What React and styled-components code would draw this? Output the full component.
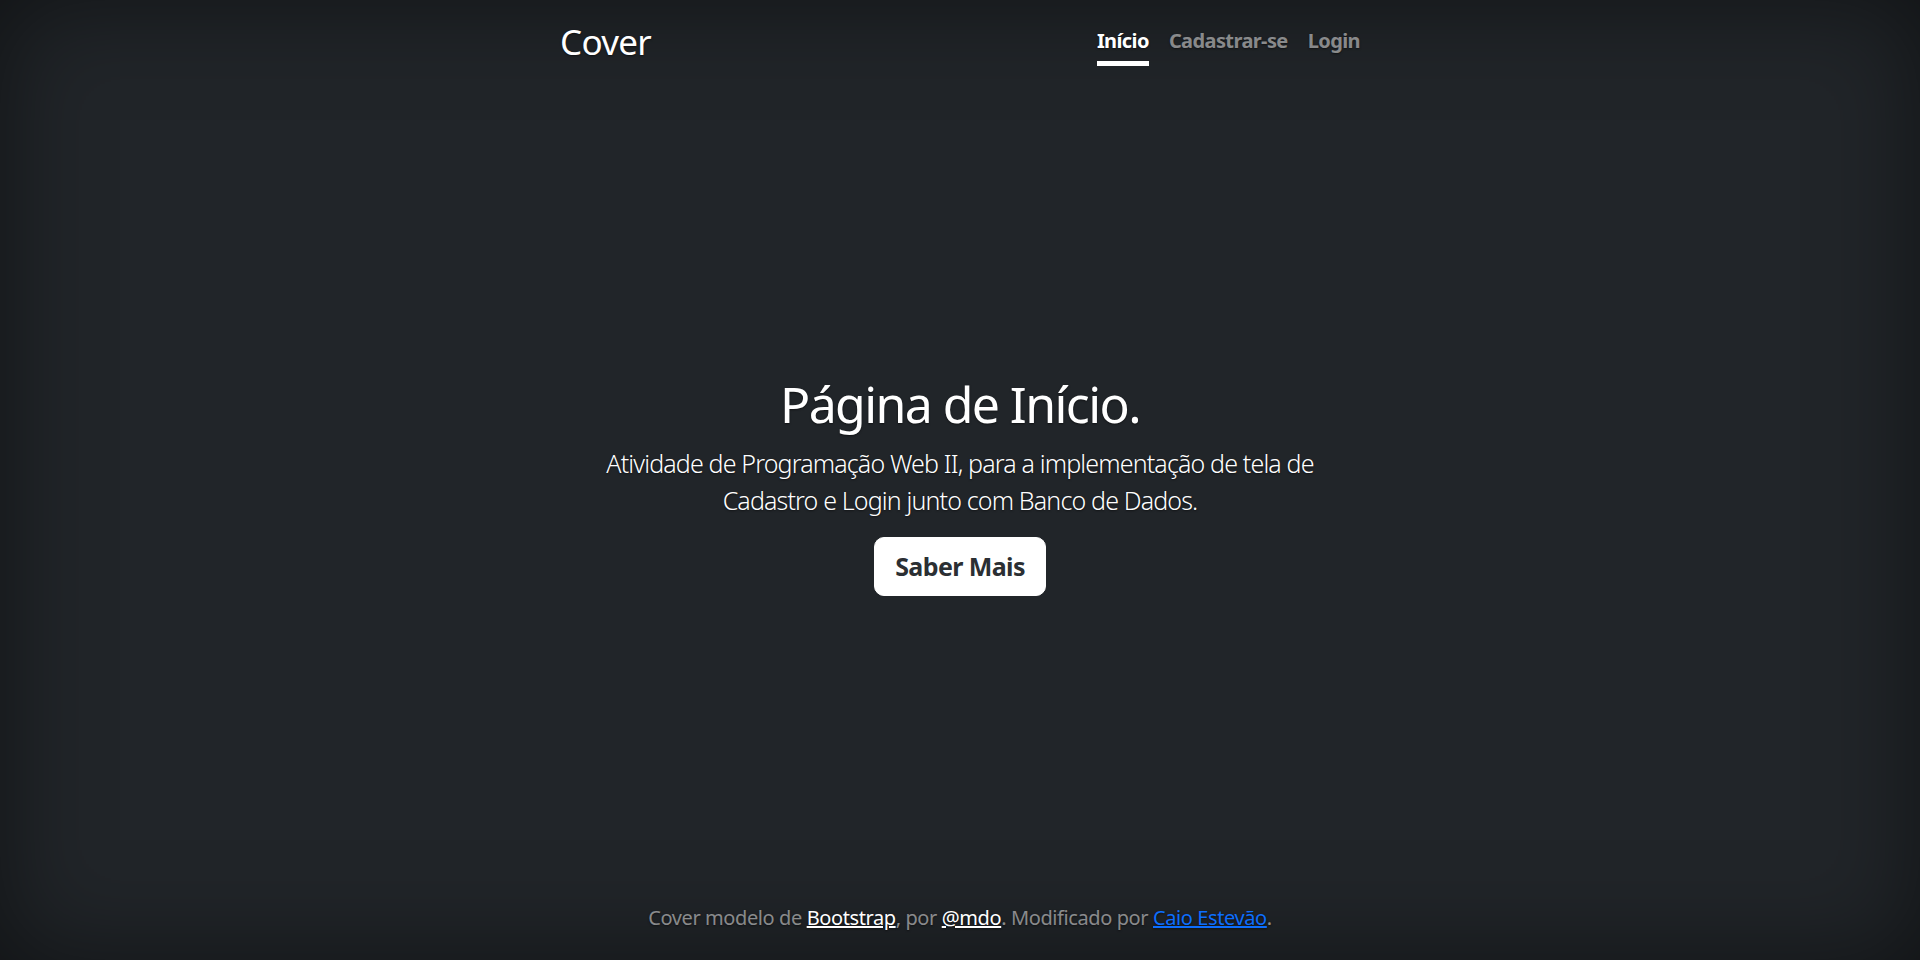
import * as React from 'react'
import styled, { createGlobalStyle } from 'styled-components'

const GlobalStyle = createGlobalStyle`
  html, body, #root {
    height: 100%;
  }

  body {
    margin: 0;
    background-color: #212529;
    color: #fff;
    font-family: 'Noto Sans', 'Open Sans', sans-serif;
    font-size: 20px;
    line-height: 1.5;
    box-shadow: inset 0 0 100px rgba(0, 0, 0, 0.5);
    text-shadow: 0 1px 2px rgba(0, 0, 0, 0.5);
  }

  *, *::before, *::after {
    box-sizing: border-box;
  }
`

const CoverContainer = styled.div`
  display: flex;
  flex-direction: column;
  width: 100%;
  max-width: 840px;
  height: 100%;
  margin: 0 auto;
  padding: 21px 20px 27px;
`

const Masthead = styled.header`
  display: flex;
  justify-content: space-between;
  align-items: flex-start;
  margin-bottom: auto;
`

const Brand = styled.h3`
  margin: 0;
  font-size: 35px;
  font-weight: 400;
  line-height: 1.2;
  letter-spacing: -0.7px;
`

const Nav = styled.nav`
  display: flex;
`

const NavLink = styled.a`
  margin-left: 20px;
  padding: 5px 0;
  font-size: 20px;
  font-weight: 700;
  line-height: 30px;
  letter-spacing: -0.6px;
  text-decoration: none;
  color: ${(p) => (p.$active ? '#fff' : 'rgba(255, 255, 255, 0.5)')};
  border-bottom: 5px solid ${(p) => (p.$active ? '#fff' : 'transparent')};
`

const Main = styled.main`
  padding: 18px 20px 0;
  text-align: center;
`

const Title = styled.h1`
  margin: 0 0 11px;
  font-size: 50px;
  font-weight: 400;
  line-height: 1.2;
  letter-spacing: -1.6px;
`

const Lead = styled.p`
  margin: 0 0 17px;
  font-size: 25px;
  font-weight: 300;
  line-height: 1.5;
  letter-spacing: -0.85px;
`

const Button = styled.a`
  display: inline-block;
  padding: 10px 20px;
  font-size: 25px;
  font-weight: 700;
  line-height: 1.5;
  letter-spacing: -0.6px;
  color: #2b2f33;
  text-decoration: none;
  text-shadow: none;
  background-color: #fff;
  border: 1px solid #fff;
  border-radius: 10px;
`

const Footer = styled.footer`
  margin-top: auto;
  text-align: center;
  color: rgba(255, 255, 255, 0.5);
  font-size: 20px;
  letter-spacing: -0.4px;

  p {
    margin: 0;
  }
`

const FooterLink = styled.a`
  color: ${(p) => (p.$accent ? '#0d6efd' : '#fff')};
  text-decoration: underline;
`

export default function App() {
  return (
    <>
      <GlobalStyle />
      <CoverContainer>
        <Masthead>
          <Brand>Cover</Brand>
          <Nav>
            <NavLink $active href="#">Início</NavLink>
            <NavLink href="#">Cadastrar-se</NavLink>
            <NavLink href="#">Login</NavLink>
          </Nav>
        </Masthead>

        <Main>
          <Title>Página de Início.</Title>
          <Lead>
            Atividade de Programação Web II, para a implementação de tela de
            Cadastro e Login junto com Banco de Dados.
          </Lead>
          <Lead>
            <Button href="#">Saber Mais</Button>
          </Lead>
        </Main>

        <Footer>
          <p>
            Cover modelo de <FooterLink href="#">Bootstrap</FooterLink>, por{' '}
            <FooterLink href="#">@mdo</FooterLink>. Modificado por{' '}
            <FooterLink $accent href="#">Caio Estevão</FooterLink>.
          </p>
        </Footer>
      </CoverContainer>
    </>
  )
}
